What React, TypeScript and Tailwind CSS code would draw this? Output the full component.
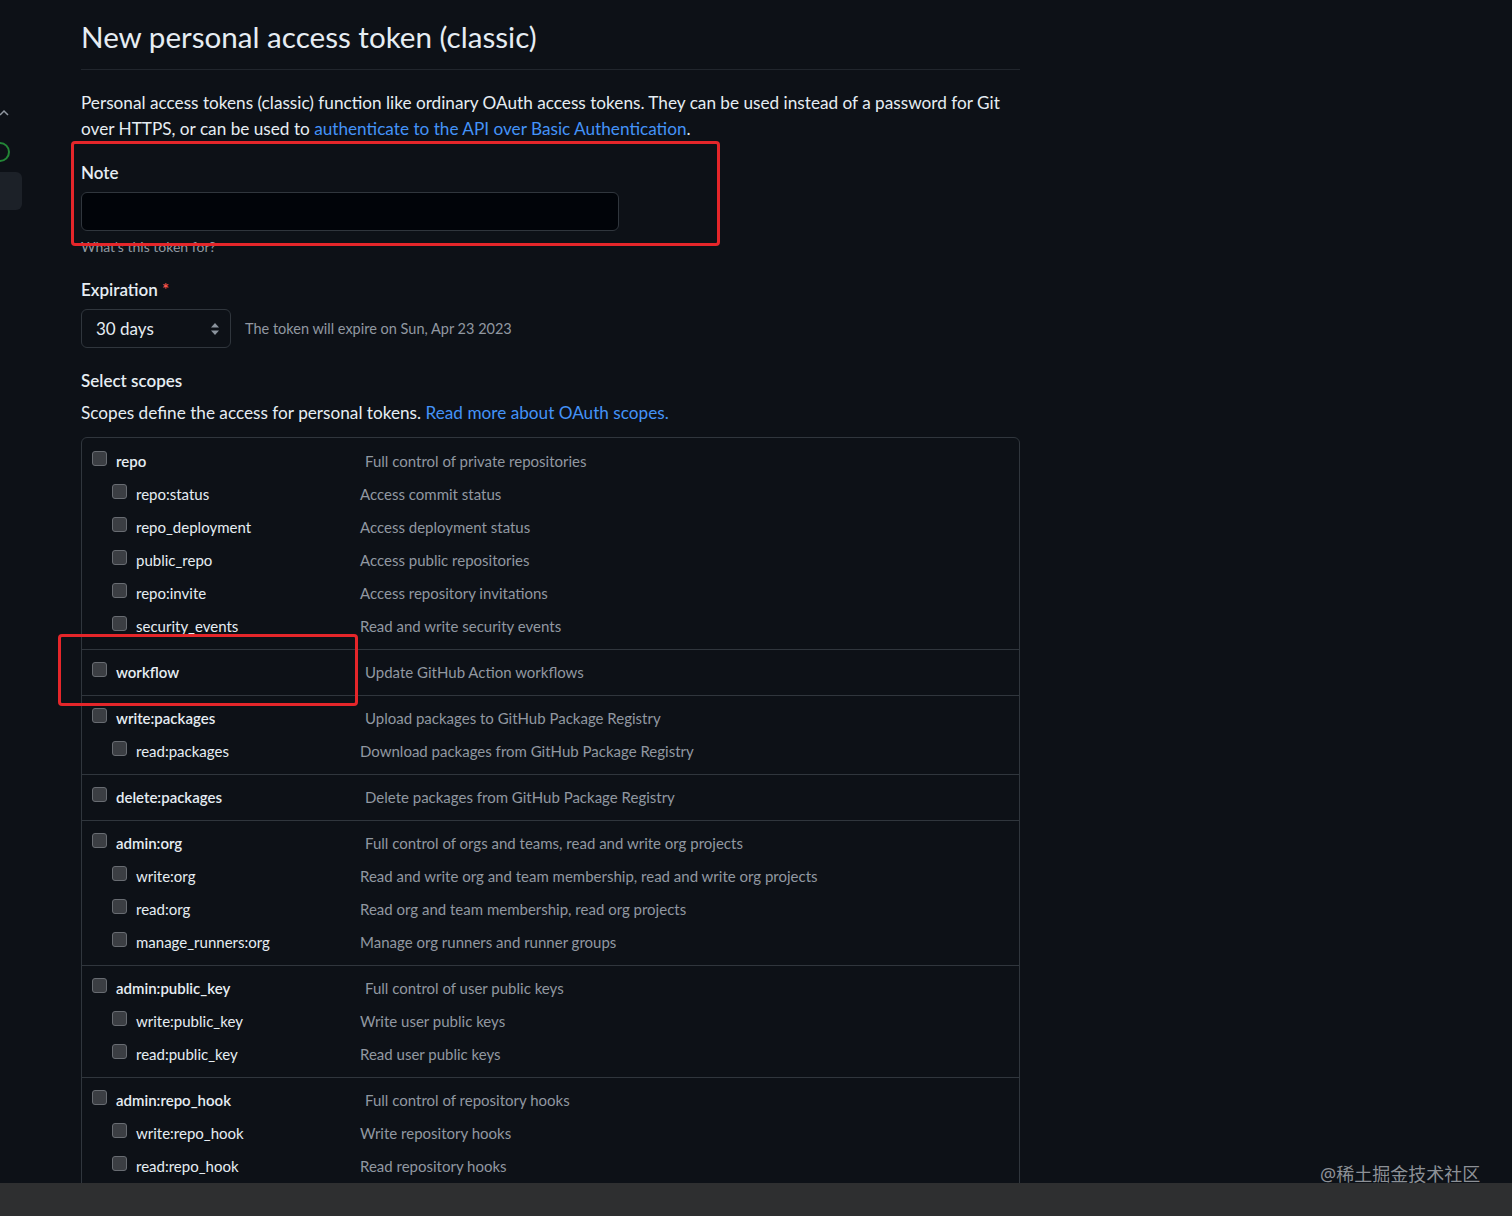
import React from 'react'

type Scope = { name: string; desc: string; children?: { name: string; desc: string }[] }

const SCOPES: Scope[] = [
  {
    name: 'repo',
    desc: 'Full control of private repositories',
    children: [
      { name: 'repo:status', desc: 'Access commit status' },
      { name: 'repo_deployment', desc: 'Access deployment status' },
      { name: 'public_repo', desc: 'Access public repositories' },
      { name: 'repo:invite', desc: 'Access repository invitations' },
      { name: 'security_events', desc: 'Read and write security events' },
    ],
  },
  { name: 'workflow', desc: 'Update GitHub Action workflows' },
  {
    name: 'write:packages',
    desc: 'Upload packages to GitHub Package Registry',
    children: [{ name: 'read:packages', desc: 'Download packages from GitHub Package Registry' }],
  },
  { name: 'delete:packages', desc: 'Delete packages from GitHub Package Registry' },
  {
    name: 'admin:org',
    desc: 'Full control of orgs and teams, read and write org projects',
    children: [
      { name: 'write:org', desc: 'Read and write org and team membership, read and write org projects' },
      { name: 'read:org', desc: 'Read org and team membership, read org projects' },
      { name: 'manage_runners:org', desc: 'Manage org runners and runner groups' },
    ],
  },
  {
    name: 'admin:public_key',
    desc: 'Full control of user public keys',
    children: [
      { name: 'write:public_key', desc: 'Write user public keys' },
      { name: 'read:public_key', desc: 'Read user public keys' },
    ],
  },
  {
    name: 'admin:repo_hook',
    desc: 'Full control of repository hooks',
    children: [
      { name: 'write:repo_hook', desc: 'Write repository hooks' },
      { name: 'read:repo_hook', desc: 'Read repository hooks' },
    ],
  },
]

const Box = () => (
  <span className="mt-[-6px] block h-[15px] w-[15px] shrink-0 rounded-[3px] border border-[#686c72] bg-[#3b3e43]" />
)

const ScopeGroup = ({ scope }: { scope: Scope }) => (
  <div className="border-b border-[#30363d] py-[6px] pl-[10px]">
    <div className="flex h-[33px] items-center">
      <div className="flex w-[273px] items-center gap-[9px]">
        <Box />
        <span className="text-[15px] font-semibold text-[#e6edf3]">{scope.name}</span>
      </div>
      <span className="text-[15px] text-[#9198a1]">{scope.desc}</span>
    </div>
    {scope.children?.map((c) => (
      <div key={c.name} className="ml-[20px] flex h-[33px] items-center">
        <div className="flex w-[248px] items-center gap-[9px]">
          <Box />
          <span className="text-[15px] text-[#e6edf3]">{c.name}</span>
        </div>
        <span className="text-[15px] text-[#9198a1]">{c.desc}</span>
      </div>
    ))}
  </div>
)

export default function App() {
  return (
    <div
      className="relative h-[1216px] overflow-hidden bg-[#0d1117] text-[#e6edf3]"
      style={{ fontFamily: 'Lato, "Noto Sans", sans-serif' }}
    >
      <div className="flex h-[1183px] overflow-hidden">
        {/* sidebar remnant */}
        <div className="flex w-[81px] shrink-0 flex-col pt-[108px]">
          <svg width="12" height="10" viewBox="0 0 12 10" className="ml-[-1px]">
            <path d="M1 7 L5 3 L9 7" stroke="#9198a1" strokeWidth="1.5" fill="none" />
          </svg>
          <div className="ml-[-12px] mt-[24px] flex h-[20px] w-[22px] items-center justify-end rounded-full border-2 border-[#238636] pr-[8px]">
            <span className="block h-[8px] w-[4px] bg-[#3fb950]" />
          </div>
          <div className="ml-[-10px] mt-[10px] h-[38px] w-[32px] rounded-[6px] bg-[#1c2128]" />
        </div>

        <div className="w-[939px] shrink-0">
          <h1 className="border-b border-[#21262d] pb-[12px] pt-[17px] text-[29.6px] font-normal leading-[40px] text-[#e6edf3]">
            New personal access token (classic)
          </h1>
          <div className="mt-[20px] text-[17.2px] leading-[26px] text-[#e6edf3]">
            <div>
              Personal access tokens (classic) function like ordinary OAuth access tokens. They can be used instead of a
              password for Git
            </div>
            <div>
              over HTTPS, or can be used to <a className="text-[#4493f8]">authenticate to the API over Basic Authentication</a>.
            </div>
          </div>

          <div className="mt-[18px]">
            <label className="block text-[17px] font-semibold leading-[26px]">Note</label>
            <div className="mt-[6px] h-[39px] w-[538px] rounded-[6px] border border-[#30363d] bg-[#010409]" />
            <p className="mt-[6px] text-[14px] leading-[20px] text-[#9198a1]">What's this token for?</p>
          </div>

          <div className="mt-[20px]">
            <label className="block text-[17px] font-semibold leading-[26px]">
              Expiration <span className="text-[#f85149]">*</span>
            </label>
            <div className="mt-[6px] flex items-center gap-[14px]">
              <div className="flex h-[39px] w-[150px] items-center justify-between rounded-[6px] border border-[#30363d] bg-[#0d1117] pl-[14px] pr-[10px]">
                <span className="text-[17px]">30 days</span>
                <svg width="10" height="14" viewBox="0 0 10 14">
                  <path d="M5 1 L9 5.5 H1 Z" fill="#8b949e" />
                  <path d="M5 13 L9 8.5 H1 Z" fill="#8b949e" />
                </svg>
              </div>
              <span className="text-[14.5px] text-[#9198a1]">The token will expire on Sun, Apr 23 2023</span>
            </div>
          </div>

          <h3 className="mt-[20px] text-[17px] font-semibold leading-[26px]">Select scopes</h3>
          <p className="mt-[6px] text-[17.2px] leading-[26px]">
            Scopes define the access for personal tokens.{' '}
            <a className="text-[#4493f8]">Read more about OAuth scopes.</a>
          </p>

          <div className="mt-[11px] rounded-t-[6px] border border-[#30363d] pt-[1px]">
            {SCOPES.map((s) => (
              <ScopeGroup key={s.name} scope={s} />
            ))}
          </div>
        </div>
      </div>

      <div className="h-[33px] bg-[#2e2f30]" />

      {/* annotation overlays */}
      <div className="absolute left-[71px] top-[141px] h-[105px] w-[649px] rounded-[4px] border-[3px] border-[#e5262a]" />
      <div className="absolute left-[58px] top-[634px] h-[72px] w-[300px] rounded-[4px] border-[3px] border-[#e5262a]" />

      <span
        className="absolute left-[1320px] top-[1161px] text-[18px] text-[#8c9096]"
        style={{ fontFamily: '"Noto Sans", "Noto Sans CJK SC", sans-serif' }}
      >
        @稀土掘金技术社区
      </span>
    </div>
  )
}
